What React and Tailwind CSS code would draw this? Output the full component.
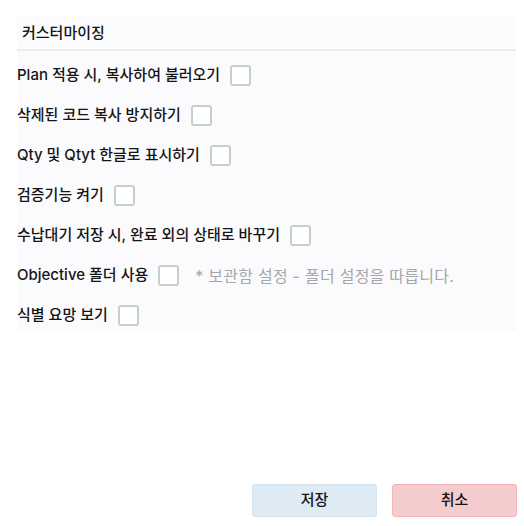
const ROWS = [
  { label: 'Plan 적용 시, 복사하여 불러오기' },
  { label: '삭제된 코드 복사 방지하기' },
  { label: 'Qty 및 Qtyt 한글로 표시하기' },
  { label: '검증기능 켜기' },
  { label: '수납대기 저장 시, 완료 외의 상태로 바꾸기' },
  { label: 'Objective 폴더 사용', note: '* 보관함 설정 - 폴더 설정을 따릅니다.' },
  { label: '식별 요망 보기' },
]

function Box() {
  return <span className="block w-[21px] h-[21px] rounded-[3px] border-2 border-[#c4cfd0] bg-white shrink-0" />
}

export default function App() {
  return (
    <div
      className="w-[524px] h-[526px] bg-white flex flex-col text-[#151515] text-[15px]"
      style={{ fontFamily: 'Inter, "Noto Sans CJK KR", sans-serif' }}
    >
      <div className="ml-[17px] mt-[17px] w-[499px] bg-[#fbfbfd]">
        <div className="h-[34px] flex items-center pl-[5px] border-b-2 border-[#ececef] font-medium">
          커스터마이징
        </div>
        <div className="flex flex-col gap-[19px] pt-[14px] pb-[5px] font-medium">
          {ROWS.map((r) => (
            <div key={r.label} className="flex items-center h-[21px]">
              <span>{r.label}</span>
              <span className="ml-[10px]"><Box /></span>
              {r.note && (
                <span className="ml-[16px] text-[#a3a7ab] font-normal text-[16px] tracking-[0.25px]">{r.note}</span>
              )}
            </div>
          ))}
        </div>
      </div>
      <div className="mt-auto mb-[9px] flex justify-end gap-[15px] pr-[7px] font-medium">
        <button className="w-[125px] h-[33px] rounded-[3px] bg-[#deebf4] border border-[#d4e3ee]">저장</button>
        <button className="w-[125px] h-[33px] rounded-[3px] bg-[#f5cccd] border border-[#f1b5b6]">취소</button>
      </div>
    </div>
  )
}
